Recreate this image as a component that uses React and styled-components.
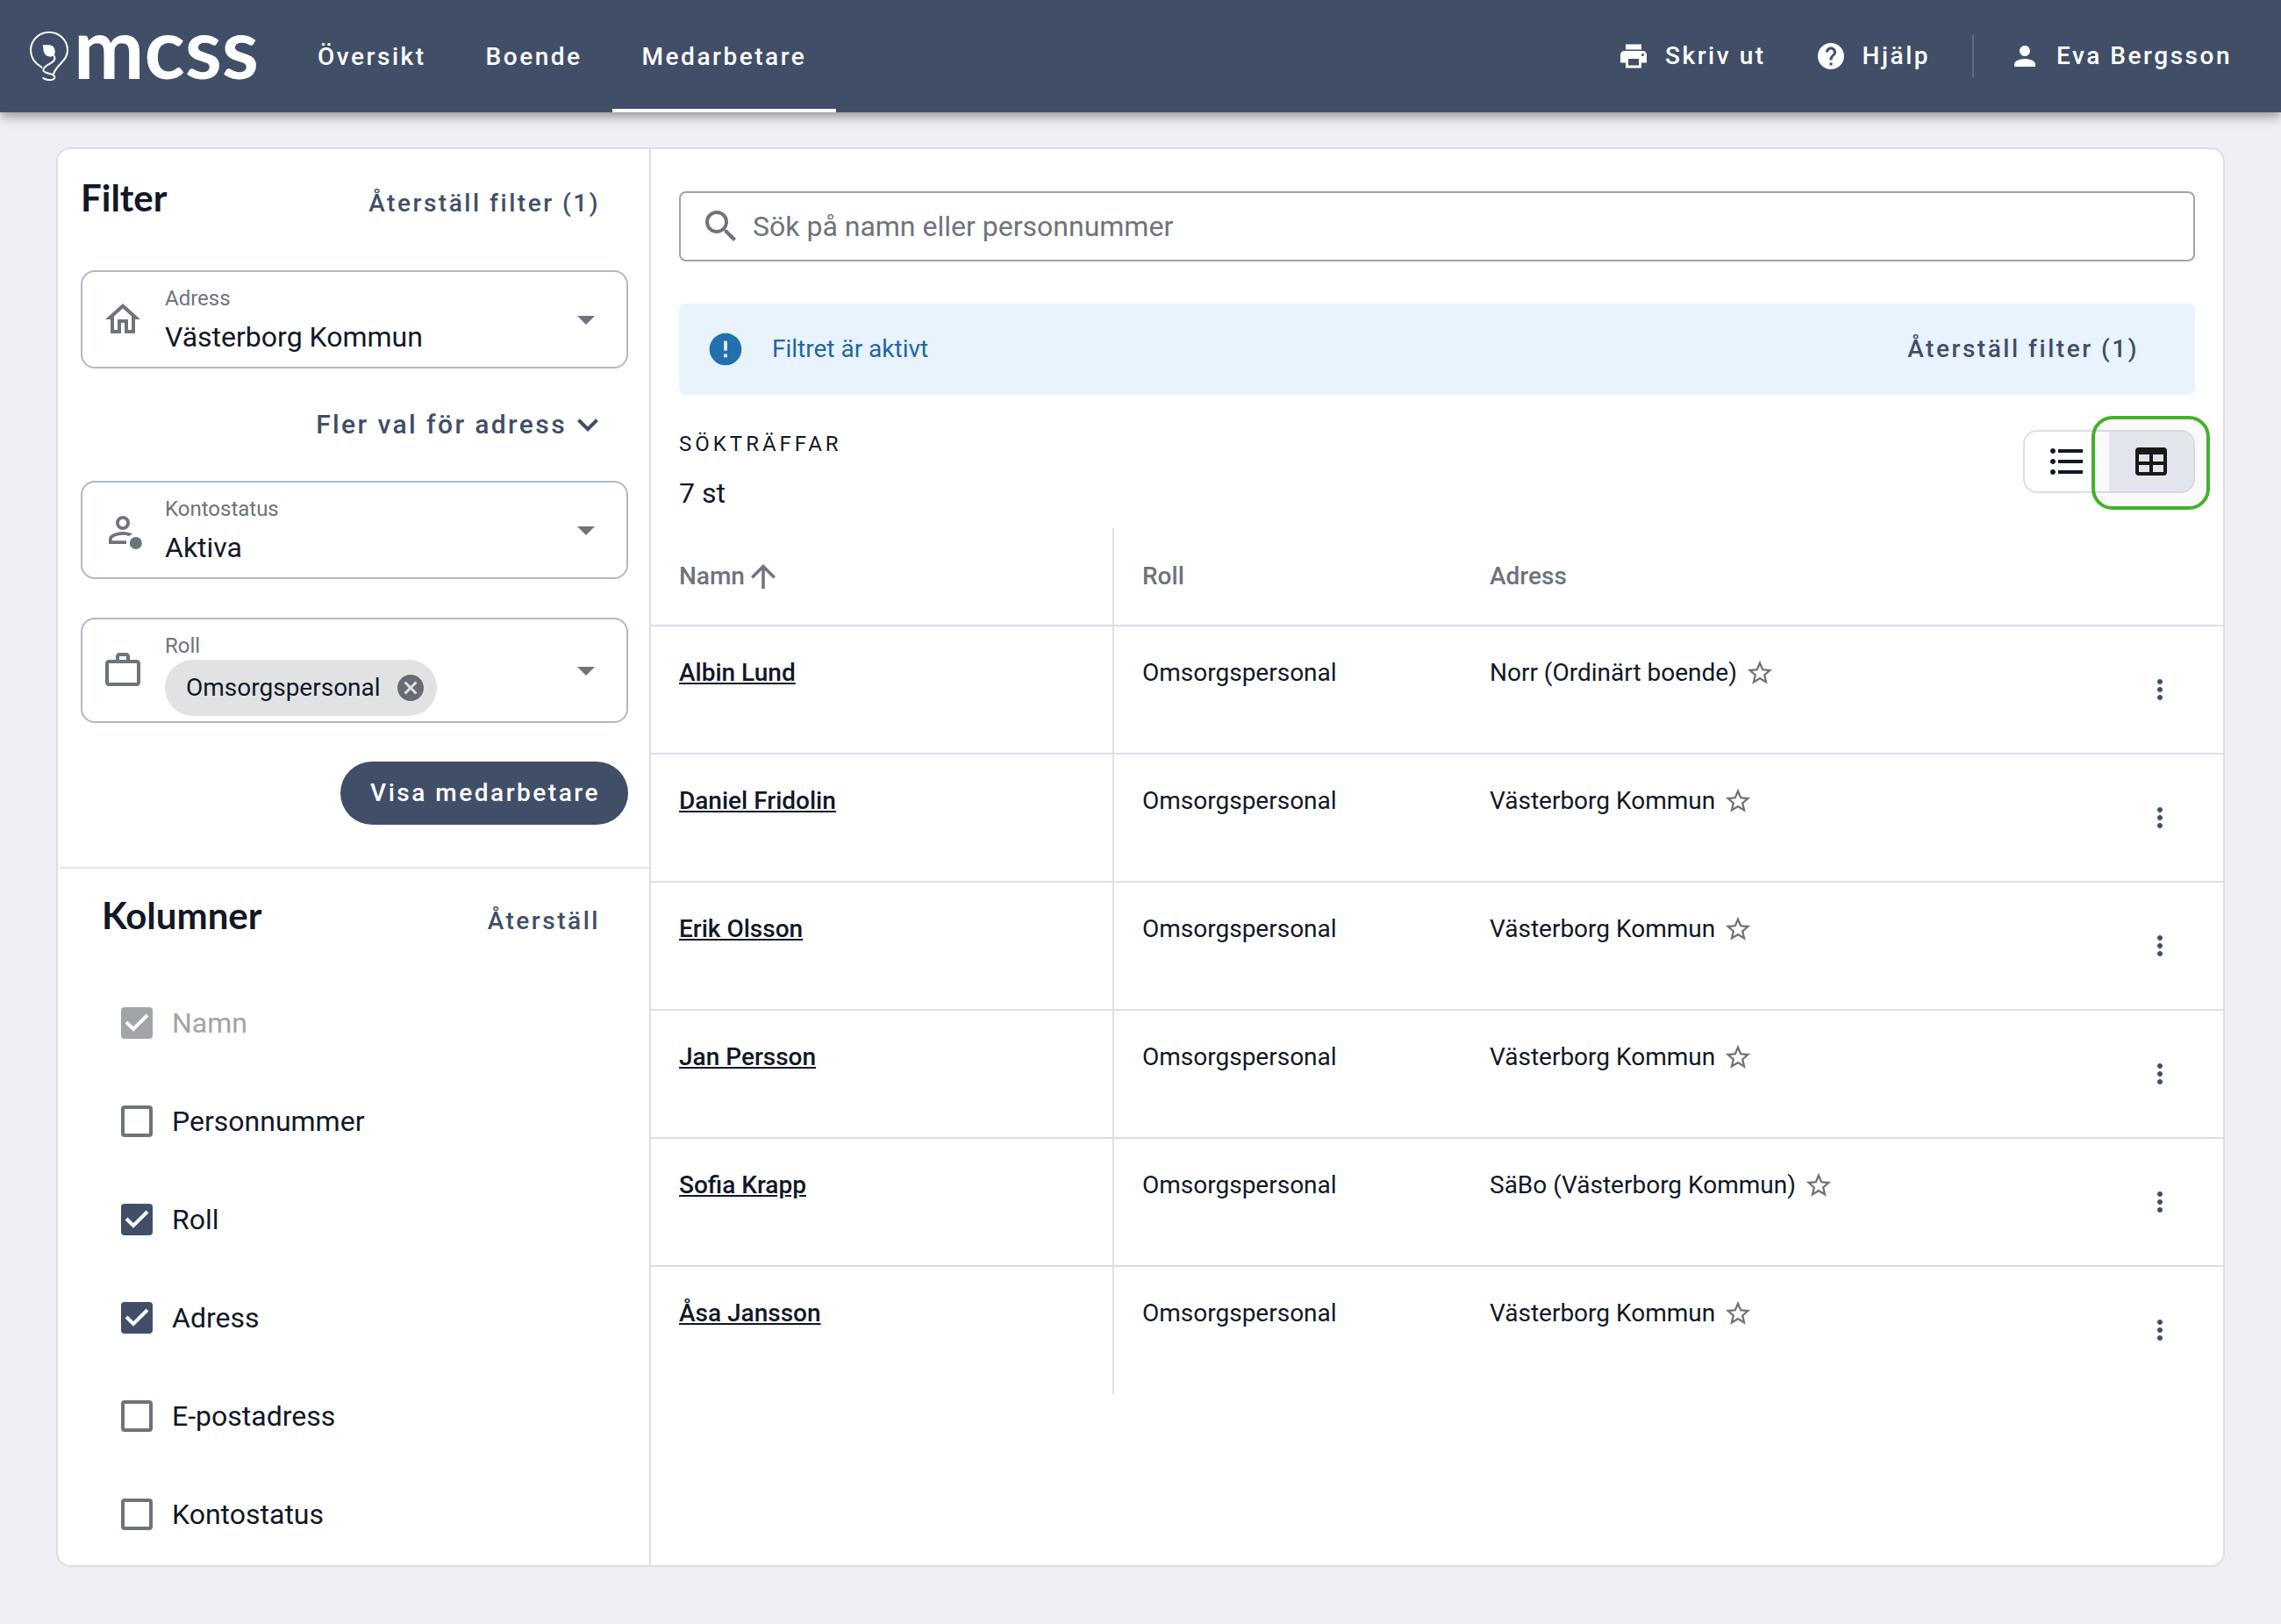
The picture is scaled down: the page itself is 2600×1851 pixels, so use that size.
import React, { useState } from 'react';
import styled, { createGlobalStyle, ThemeProvider } from 'styled-components';
import {
    MdPrint,
    MdHelp,
    MdPerson,
    MdArrowDropDown,
    MdExpandMore,
    MdCancel,
    MdSearch,
    MdError,
    MdFormatListBulleted,
    MdArrowUpward,
    MdStarBorder,
    MdMoreVert
} from 'react-icons/md';

const theme = {
    main: '#414e67',
    text: '#111827',
    muted: '#6e737c',
    disabled: '#a1a4a9',
    line: '#dcdee5',
    page: '#eff0f5'
}

const staff = [
    { name: 'Albin Lund', role: 'Omsorgspersonal', address: 'Norr (Ordinärt boende)' },
    { name: 'Daniel Fridolin', role: 'Omsorgspersonal', address: 'Västerborg Kommun' },
    { name: 'Erik Olsson', role: 'Omsorgspersonal', address: 'Västerborg Kommun' },
    { name: 'Jan Persson', role: 'Omsorgspersonal', address: 'Västerborg Kommun' },
    { name: 'Sofia Krapp', role: 'Omsorgspersonal', address: 'SäBo (Västerborg Kommun)' },
    { name: 'Åsa Jansson', role: 'Omsorgspersonal', address: 'Västerborg Kommun' }
]

const initialColumns = [
    { id: 'namn', label: 'Namn', checked: true, disabled: true },
    { id: 'personnummer', label: 'Personnummer', checked: false },
    { id: 'roll', label: 'Roll', checked: true },
    { id: 'adress', label: 'Adress', checked: true },
    { id: 'epost', label: 'E-postadress', checked: false },
    { id: 'kontostatus', label: 'Kontostatus', checked: false }
]

const HomeIcon = () => (
    <svg width="48" height="48" viewBox="0 0 24 24" fill="currentColor" aria-hidden="true">
        <path d="M12 5.69l5 4.5V18h-2v-6H9v6H7v-7.81l5-4.5M12 3L2 12h3v8h6v-6h2v6h6v-8h3L12 3z" />
    </svg>
)

const AccountIcon = () => (
    <svg width="48" height="48" viewBox="0 0 24 24" fill="currentColor" aria-hidden="true">
        <path d="M12 5.9a2.1 2.1 0 1 1 0 4.2 2.1 2.1 0 0 1 0-4.2M12 4a4 4 0 1 0 0 8 4 4 0 0 0 0-8z" />
        <path d="M12 13c-2.67 0-8 1.34-8 4v3h10v-1.9H5.9V17c0-.64 3.13-2.1 6.1-2.1 1.2 0 2.4.24 3.4.6l2.2-1.1C15.8 13.4 13.4 13 12 13z" />
        <circle cx="19.4" cy="19.5" r="3.5" />
    </svg>
)

const BriefcaseIcon = () => (
    <svg width="48" height="48" viewBox="0 0 24 24" fill="currentColor" aria-hidden="true">
        <path fillRule="evenodd" d="M14 6V4h-4v2h4zM4 8v11h16V8H4zm16-2c1.11 0 2 .89 2 2v11c0 1.11-.89 2-2 2H4c-1.11 0-2-.89-2-2V8c0-1.11.89-2 2-2h4V4c0-1.11.89-2 2-2h4c1.11 0 2 .89 2 2v2h4z" />
    </svg>
)

const TableIcon = () => (
    <svg width="48" height="48" viewBox="0 0 24 24" fill="#1a1a1a" aria-hidden="true">
        <path fillRule="evenodd" d="M5 4h14a2 2 0 0 1 2 2v12a2 2 0 0 1-2 2H5a2 2 0 0 1-2-2V6a2 2 0 0 1 2-2zm0 4v4h6V8H5zm8 0v4h6V8h-6zm-8 6v4h6v-4H5zm8 0v4h6v-4h-6z" />
    </svg>
)

const LogoMark = () => (
    <svg width="48" height="60" viewBox="38 42 144 180" fill="none" stroke="#fff" strokeWidth="6" strokeLinecap="round" aria-hidden="true">
        <path d="M84 170C64 158 47 140 47 112a63 62 0 0 1 126 0C173 148 138 158 125 192" />
        <path d="M126 130C142 156 94 158 90 178C88 194 130 188 129 204C128 218 98 214 90 207" />
        <path d="M88 94H112C126 96 131 108 130 120C128 132 118 136 108 133C94 130 90 116 90 106Z" fill="#fff" stroke="none" />
    </svg>
)

function Field (props) {
    const {id, label, icon, children} = props;
    return (
        <FieldBox>
            {icon}
            <FieldBody>
                <FieldLabel htmlFor={id}>{label}</FieldLabel>
                {children}
            </FieldBody>
            <MdArrowDropDown size={48} />
        </FieldBox>
    )
}

export default function App () {
    const [columns, setColumns] = useState(initialColumns);
    const [hasRole, setHasRole] = useState(true);

    const toggleColumn = (id) => {
        setColumns(columns.map(item => item.id === id ? {...item, checked: !item.checked} : item));
    }

    const displayRow = (item) => {
        return (
            <tr key={item.name}>
                <Cell><NameLink href="#">{item.name}</NameLink></Cell>
                <Cell>{item.role}</Cell>
                <Cell>
                    <Address>
                        {item.address}
                        <MdStarBorder size={34} color={theme.muted} />
                    </Address>
                </Cell>
                <ActionCell>
                    <IconButton type="button" aria-label={`Meny för ${item.name}`}>
                        <MdMoreVert size={36} />
                    </IconButton>
                </ActionCell>
            </tr>
        )
    }

    return (
        <ThemeProvider theme={theme}>
            <GlobalStyle />
            <Header>
                <Logo href="#">
                    <LogoMark />
                    <LogoText>mcss</LogoText>
                </Logo>
                <Nav>
                    <NavLink href="#">Översikt</NavLink>
                    <NavLink href="#">Boende</NavLink>
                    <NavLink href="#" $active>Medarbetare</NavLink>
                </Nav>
                <Tools>
                    <ToolButton type="button"><MdPrint size={36} />Skriv ut</ToolButton>
                    <ToolButton type="button"><MdHelp size={36} />Hjälp</ToolButton>
                    <UserArea>
                        <ToolButton type="button"><MdPerson size={36} />Eva Bergsson</ToolButton>
                    </UserArea>
                </Tools>
            </Header>
            <Card>
                <Sidebar>
                    <Filters>
                        <PanelHead>
                            <Title>Filter</Title>
                            <TextButton type="button">Återställ filter (1)</TextButton>
                        </PanelHead>
                        <Field id="address" label="Adress" icon={<HomeIcon />}>
                            <Select id="address"><option>Västerborg Kommun</option></Select>
                        </Field>
                        <MoreRow>
                            <MoreButton type="button">Fler val för adress<MdExpandMore size={48} /></MoreButton>
                        </MoreRow>
                        <FieldStack>
                            <Field id="status" label="Kontostatus" icon={<AccountIcon />}>
                                <Select id="status"><option>Aktiva</option></Select>
                            </Field>
                            <Field id="role" label="Roll" icon={<BriefcaseIcon />}>
                                <ChipRow>
                                    {hasRole &&
                                        <Chip>
                                            Omsorgspersonal
                                            <IconButton type="button" aria-label="Ta bort Omsorgspersonal" onClick={() => setHasRole(false)}>
                                                <MdCancel size={36} color="#666b74" />
                                            </IconButton>
                                        </Chip>
                                    }
                                    <ChipSelect id="role"><option></option></ChipSelect>
                                </ChipRow>
                            </Field>
                            <SubmitButton type="button">Visa medarbetare</SubmitButton>
                        </FieldStack>
                    </Filters>
                    <Columns>
                        <PanelHead $inset>
                            <Title>Kolumner</Title>
                            <TextButton type="button" onClick={() => setColumns(initialColumns)}>Återställ</TextButton>
                        </PanelHead>
                        {columns.map(item => (
                            <Option key={item.id} $disabled={item.disabled}>
                                <Checkbox
                                    type="checkbox"
                                    checked={item.checked}
                                    disabled={item.disabled}
                                    onChange={() => toggleColumn(item.id)}
                                />
                                {item.label}
                            </Option>
                        ))}
                    </Columns>
                </Sidebar>
                <Main>
                    <SearchBox>
                        <MdSearch size={48} />
                        <SearchInput type="search" aria-label="Sök" placeholder="Sök på namn eller personnummer" />
                    </SearchBox>
                    <Notice>
                        <MdError size={44} color="#2270ae" />
                        <NoticeText>Filtret är aktivt</NoticeText>
                        <TextButton type="button">Återställ filter (1)</TextButton>
                    </Notice>
                    <Summary>
                        <div>
                            <Overline>SÖKTRÄFFAR</Overline>
                            <Count>7 st</Count>
                        </div>
                        <ViewToggle>
                            <ViewButton type="button" aria-label="Lista"><MdFormatListBulleted size={48} /></ViewButton>
                            <ViewButton type="button" aria-label="Tabell" $active><TableIcon /></ViewButton>
                        </ViewToggle>
                    </Summary>
                    <Table>
                        <colgroup>
                            <NameCol />
                            <RoleCol />
                            <col />
                            <ActionCol />
                        </colgroup>
                        <thead>
                            <tr>
                                <HeadCell scope="col">
                                    <SortButton type="button">Namn<MdArrowUpward size={42} /></SortButton>
                                </HeadCell>
                                <HeadCell scope="col">Roll</HeadCell>
                                <HeadCell scope="col">Adress</HeadCell>
                                <HeadCell />
                            </tr>
                        </thead>
                        <tbody>{staff.map(item => displayRow(item))}</tbody>
                    </Table>
                </Main>
            </Card>
        </ThemeProvider>
    )
}

const GlobalStyle = createGlobalStyle`
    * {
        box-sizing: border-box;
    }
    body {
        margin: 0;
        background: ${props => props.theme.page};
        color: ${props => props.theme.text};
        font-family: Roboto, "Liberation Sans", sans-serif;
        font-size: 28px;
        line-height: 36px;
    }
    button, input, select {
        font: inherit;
        color: inherit;
    }
    button {
        padding: 0;
        border: 0;
        background: none;
        cursor: pointer;
    }
    svg {
        display: block;
        flex: none;
    }
`
const Header = styled.header`
    position: relative;
    display: flex;
    height: 128px;
    padding: 0 56px 0 32px;
    background: ${props => props.theme.main};
    color: #fff;
    font-weight: 500;
    letter-spacing: 0.09em;
    box-shadow: 0 4px 8px -2px rgba(0, 0, 0, 0.2), 0 8px 10px rgba(0, 0, 0, 0.14), 0 2px 20px rgba(0, 0, 0, 0.12);
`
const Logo = styled.a`
    display: flex;
    align-items: center;
    gap: 4px;
    width: 296px;
    color: inherit;
    text-decoration: none;
`
const LogoText = styled.span`
    align-self: flex-start;
    font-family: Lato, sans-serif;
    font-size: 96px;
    font-weight: 700;
    line-height: 106px;
    letter-spacing: normal;
`
const Nav = styled.nav`
    display: flex;
`
const NavLink = styled.a`
    display: flex;
    align-items: center;
    padding: 6px 34px 0;
    border-bottom: 4px solid ${props => props.$active ? '#fff' : 'transparent'};
    color: inherit;
    text-decoration: none;
`
const Tools = styled.div`
    display: flex;
    align-items: center;
    gap: 56px;
    margin-left: auto;
`
const ToolButton = styled.button`
    display: flex;
    align-items: center;
    gap: 18px;
    letter-spacing: inherit;
`
const UserArea = styled.div`
    display: flex;
    align-items: center;
    height: 48px;
    margin-left: -8px;
    padding-left: 40px;
    border-left: 2px solid #5f697b;
`
const Card = styled.div`
    display: grid;
    grid-template-columns: 676px minmax(0, 1fr);
    margin: 40px 64px 64px;
    background: #fff;
    border: 2px solid ${props => props.theme.line};
    border-radius: 16px;
`
const Sidebar = styled.aside`
    border-right: 2px solid ${props => props.theme.line};
`
const Filters = styled.section`
    padding: 32px 24px 48px 26px;
`
const PanelHead = styled.div`
    display: flex;
    align-items: baseline;
    justify-content: space-between;
    height: 48px;
    padding: 0 32px 0 ${props => props.$inset ? 24 : 0}px;
    margin-bottom: ${props => props.$inset ? 42 : 58}px;
`
const Title = styled.h2`
    margin: 0;
    font-family: Lato, sans-serif;
    font-size: 42px;
    font-weight: 700;
    line-height: 46px;
`
const TextButton = styled.button`
    color: ${props => props.theme.main};
    font-weight: 500;
    letter-spacing: 0.09em;
`
const FieldBox = styled.div`
    display: flex;
    align-items: center;
    gap: 24px;
    padding: 14px 22px 6px;
    border: 2px solid #b1b7c5;
    border-radius: 16px;
    color: ${props => props.theme.muted};
    > svg {
        margin-bottom: 8px;
    }
`
const FieldBody = styled.div`
    flex: 1;
    min-width: 0;
`
const FieldLabel = styled.label`
    display: block;
    font-size: 24px;
    line-height: 32px;
`
const Select = styled.select`
    display: block;
    width: 100%;
    height: 40px;
    margin: 8px 0;
    padding: 0;
    border: 0;
    appearance: none;
    background: none;
    color: ${props => props.theme.text};
    font-size: 32px;
    line-height: 40px;
`
const ChipRow = styled.div`
    display: flex;
    align-items: center;
    height: 64px;
`
const Chip = styled.span`
    display: flex;
    align-items: center;
    gap: 16px;
    height: 64px;
    padding: 0 12px 0 24px;
    border-radius: 32px;
    background: #e1e2e4;
    color: ${props => props.theme.text};
`
const ChipSelect = styled(Select)`
    flex: 1;
    width: auto;
    min-width: 0;
`
const MoreRow = styled.div`
    display: flex;
    align-items: center;
    justify-content: flex-end;
    height: 128px;
    padding-right: 22px;
`
const MoreButton = styled(TextButton)`
    display: flex;
    align-items: center;
    font-size: 30px;
    letter-spacing: 0.08em;
`
const FieldStack = styled.div`
    display: flex;
    flex-direction: column;
    gap: 44px;
`
const SubmitButton = styled.button`
    align-self: flex-end;
    height: 72px;
    padding: 0 32px 0 34px;
    border-radius: 36px;
    background: ${props => props.theme.main};
    color: #fff;
    font-weight: 500;
    letter-spacing: 0.09em;
`
const Columns = styled.section`
    margin-left: 2px;
    padding: 30px 24px 2px;
    border-top: 2px solid #e5e6e8;
`
const Option = styled.label`
    display: flex;
    align-items: center;
    gap: 22px;
    height: 112px;
    padding-left: 46px;
    font-size: 32px;
    color: ${props => props.$disabled ? props.theme.disabled : props.theme.text};
`
const Checkbox = styled.input`
    appearance: none;
    width: 36px;
    height: 36px;
    margin: 0;
    border: 4px solid ${props => props.theme.muted};
    border-radius: 4px;
    &:checked {
        border: 0;
        background: ${props => props.disabled ? props.theme.disabled : props.theme.main} url("data:image/svg+xml,%3Csvg xmlns='http://www.w3.org/2000/svg' viewBox='0 0 36 36'%3E%3Cpath d='M6 17L14 25L30 9' fill='none' stroke='white' stroke-width='4'/%3E%3C/svg%3E") center / 36px no-repeat;
    }
`
const Main = styled.main`
    padding-top: 48px;
`
const SearchBox = styled.div`
    display: flex;
    align-items: center;
    gap: 12px;
    height: 80px;
    margin: 0 32px 48px;
    padding: 0 22px;
    border: 2px solid ${props => props.theme.disabled};
    border-radius: 8px;
    color: ${props => props.theme.muted};
`
const SearchInput = styled.input`
    flex: 1;
    min-width: 0;
    padding: 0;
    border: 0;
    outline: 0;
    background: none;
    font-size: 32px;
    &::placeholder {
        color: ${props => props.theme.muted};
        opacity: 1;
    }
`
const Notice = styled.div`
    display: flex;
    align-items: center;
    height: 104px;
    margin: 0 32px 40px;
    padding: 0 64px 0 31px;
    border-radius: 8px;
    background: #e8f3fe;
`
const NoticeText = styled.span`
    flex: 1;
    padding-left: 31px;
    color: #23679e;
`
const Summary = styled.div`
    display: flex;
    align-items: flex-start;
    justify-content: space-between;
    margin: 0 32px 20px;
`
const Overline = styled.div`
    margin-bottom: 20px;
    font-size: 24px;
    line-height: 32px;
    letter-spacing: 4px;
`
const Count = styled.div`
    font-size: 32px;
    line-height: 40px;
`
const ViewToggle = styled.div`
    display: flex;
    border: 2px solid ${props => props.theme.line};
    border-radius: 16px;
`
const ViewButton = styled.button`
    position: relative;
    display: flex;
    align-items: center;
    justify-content: center;
    width: 96px;
    height: 68px;
    border-radius: ${props => props.$active ? '0 14px 14px 0' : '14px 0 0 14px'};
    background: ${props => props.$active ? '#e7eaf1' : 'none'};
    ${props => props.$active && `
        &::after {
            content: "";
            position: absolute;
            inset: -18px -19px -21px -20px;
            border: 4px solid #45b02c;
            border-radius: 24px;
            background: rgba(0, 0, 0, 0.02);
        }
    `}
`
const Table = styled.table`
    width: 100%;
    table-layout: fixed;
    border-collapse: separate;
    border-spacing: 0;
    th:first-child, td:first-child {
        border-right: 2px solid ${props => props.theme.line};
    }
    tbody tr:last-child td {
        border-bottom-color: transparent;
    }
`
const NameCol = styled.col`
    width: 528px;
`
const RoleCol = styled.col`
    width: 396px;
`
const ActionCol = styled.col`
    width: 144px;
`
const HeadCell = styled.th`
    height: 112px;
    padding: 0 32px;
    border-bottom: 2px solid ${props => props.theme.line};
    color: ${props => props.theme.muted};
    font-weight: 500;
    text-align: left;
`
const SortButton = styled.button`
    display: flex;
    align-items: center;
`
const Cell = styled.td`
    height: 146px;
    padding: 35px 32px 0;
    border-bottom: 2px solid ${props => props.theme.line};
    vertical-align: top;
`
const ActionCell = styled.td`
    padding: 0 54px;
    border-bottom: 2px solid ${props => props.theme.line};
    vertical-align: middle;
`
const Address = styled.span`
    display: flex;
    align-items: center;
    gap: 9px;
`
const NameLink = styled.a`
    color: inherit;
    font-weight: 500;
`
const IconButton = styled.button`
    display: block;
    color: ${props => props.theme.main};
`
